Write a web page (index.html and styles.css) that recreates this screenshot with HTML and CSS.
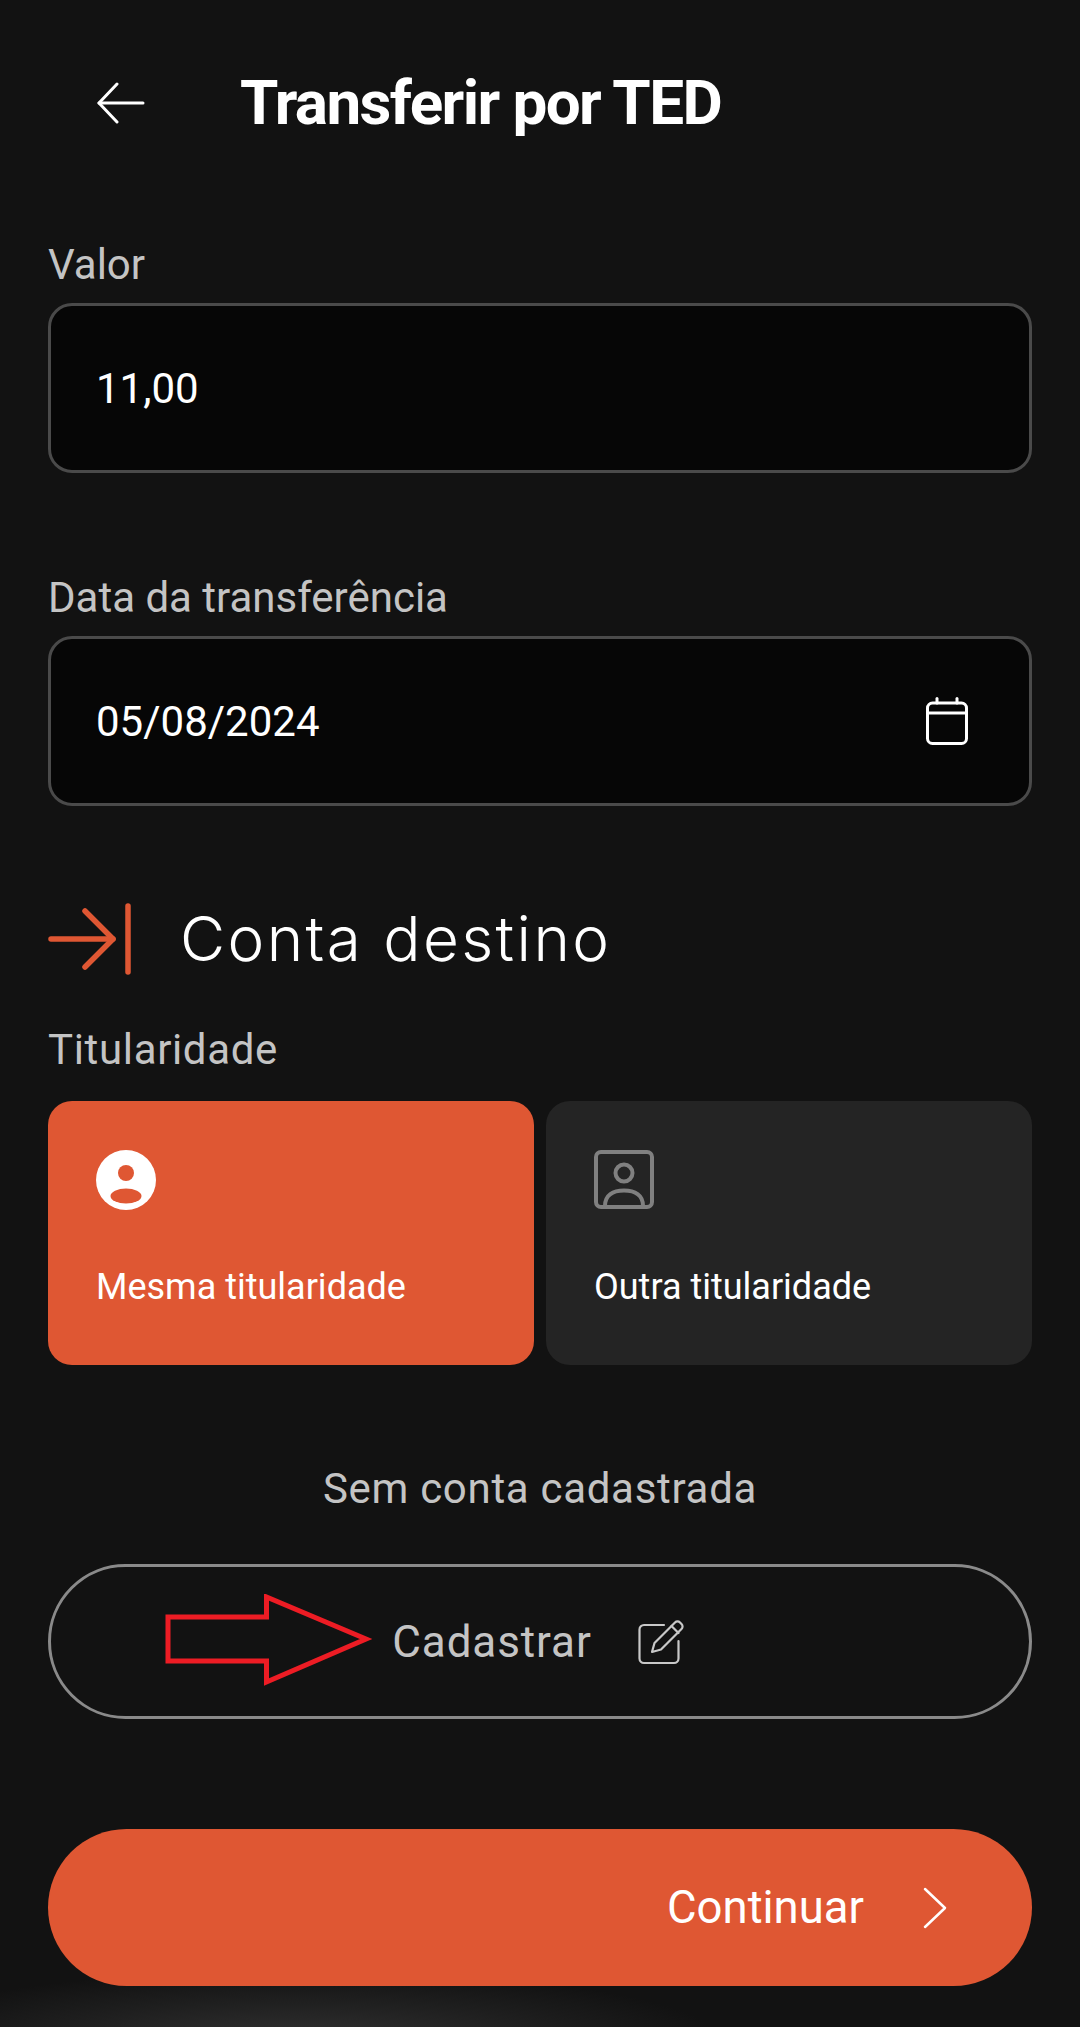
FILE: index.html
```html
<!DOCTYPE html>
<html lang="pt-BR">
<head>
    <meta charset="UTF-8">
    <meta name="viewport" content="width=device-width, initial-scale=1.0">
    <title>Transferir por TED</title>
    <link rel="stylesheet" href="styles.css">
</head>
<body>
    <div class="container">
        <header class="top-bar">
            <svg class="back-icon" viewBox="0 0 48 42" fill="none" stroke="#fff" stroke-width="3" stroke-linecap="round" stroke-linejoin="round">
                <path d="M46 21H2"/>
                <path d="M20 2 2 21l18 19"/>
            </svg>
            <h1>Transferir por TED</h1>
        </header>

        <label class="field-label">Valor</label>
        <div class="field">
            <span>11,00</span>
        </div>

        <label class="field-label date-label">Data da transferência</label>
        <div class="field">
            <span>05/08/2024</span>
            <svg class="calendar-icon" viewBox="0 0 42 48" fill="none" stroke="#fff" stroke-width="3" stroke-linecap="round" stroke-linejoin="round">
                <rect x="1.5" y="6" width="39" height="40.5" rx="5"/>
                <path d="M1.5 16h39"/>
                <path d="M11 1.500V6"/>
                <path d="M31 1.500V6"/>
            </svg>
        </div>

        <div class="section-title">
            <svg class="section-icon" viewBox="0 0 84 72" fill="none" stroke="#df5733" stroke-width="5.500" stroke-linecap="round" stroke-linejoin="round">
                <path d="M3 36h62"/>
                <path d="M37 8l28 28-28 28"/>
                <path d="M80 3v66"/>
            </svg>
            <h2>Conta destino</h2>
        </div>

        <label class="field-label owner-label">Titularidade</label>
        <div class="owner-grid">
            <div class="owner-card active">
                <svg class="owner-icon" viewBox="0 0 60 60">
                    <circle cx="30" cy="30" r="30" fill="#fff"/>
                    <circle cx="30" cy="23" r="8" fill="#df5733"/>
                    <ellipse cx="30" cy="46" rx="15.500" ry="7.500" fill="#df5733"/>
                </svg>
                <p>Mesma titularidade</p>
            </div>
            <div class="owner-card">
                <svg class="owner-icon" viewBox="0 0 60 60" fill="none" stroke="#808080" stroke-width="4" stroke-linecap="round" stroke-linejoin="round">
                    <rect x="2" y="2" width="56" height="55" rx="5"/>
                    <circle cx="30" cy="23" r="8.500"/>
                    <path d="M11 56c0-11 8-15.500 19-15.500S49 45 49 56"/>
                </svg>
                <p>Outra titularidade</p>
            </div>
        </div>

        <p class="no-account">Sem conta cadastrada</p>

        <button class="register-btn">
            <span>Cadastrar</span>
            <svg class="edit-icon" viewBox="0 0 46 46" fill="none" stroke="#c8c8c8" stroke-width="2.200" stroke-linecap="round" stroke-linejoin="round">
                <path d="M26 6H6a4.500 4.500 0 0 0-4.500 4.500v29A4.500 4.500 0 0 0 6 44h30a4.500 4.500 0 0 0 4.500-4.500V22"/>
                <path d="M14 33l2.500-9L37 3.500a3.500 3.500 0 0 1 5 0l1.500 1.500a3.500 3.500 0 0 1 0 5L23 30.500z"/>
                <path d="M33.500 7l7 7"/>
            </svg>
            <svg class="red-arrow" viewBox="0 0 210 96" fill="none" stroke="#ed1c24" stroke-width="5" stroke-linejoin="miter">
                <path d="M5 23h98.500V3L203 45l-99.500 43V67H5z"/>
            </svg>
        </button>

        <button class="continue-btn">
            <span>Continuar</span>
            <svg class="chevron-icon" viewBox="0 0 24 42" fill="none" stroke="#fff" stroke-width="2.500" stroke-linecap="round" stroke-linejoin="round">
                <path d="M2 2l20 19L2 40"/>
            </svg>
        </button>
    </div>
</body>
</html>
```

FILE: styles.css
```css
:root {
    --bg-color: #121212;
    --field-bg: #060606;
    --field-border: #4a4a4a;
    --accent-color: #df5733;
    --muted-color: #c4c4c4;
    --card-bg: #242424;
}
* { box-sizing: border-box; }
html, body { height: 100%; }
body {
    margin: 0;
    font-family: Roboto, "Noto Sans", sans-serif;
    color: #fff;
    background: radial-gradient(ellipse 420px 70px at 300px 2040px, #303030 0%, rgba(18, 18, 18, 0) 100%) no-repeat, var(--bg-color);
}
.container {
    width: 1080px;
    height: 2027px;
    padding: 0 48px;
}
.top-bar {
    display: flex;
    align-items: center;
    height: 206px;
    padding-left: 49px;
}
.back-icon { width: 48px; height: 42px; flex: none; margin-right: 95px; }
h1 {
    margin: 0;
    font-size: 62px;
    font-weight: 700;
    letter-spacing: -1.600px;
    line-height: 68px;
}
.field-label {
    display: block;
    margin: 35px 0 14px;
    font-size: 42px;
    line-height: 48px;
    color: var(--muted-color);
}
.field-label.date-label { margin-top: 101px; }
.field-label.owner-label { margin: 47px 0 27px; letter-spacing: 0.650px; }
.field {
    display: flex;
    align-items: center;
    justify-content: space-between;
    height: 170px;
    padding: 0 61px 0 45px;
    background: var(--field-bg);
    border: 3px solid var(--field-border);
    border-radius: 24px;
    font-size: 42px;
}
.calendar-icon { width: 42px; height: 48px; }
.section-title {
    display: flex;
    align-items: center;
    height: 80px;
    margin-top: 93px;
}
.section-icon { width: 84px; height: 72px; flex: none; margin-right: 48px; }
h2 {
    margin: 0 0 2px;
    font-family: Inter, sans-serif;
    font-size: 62px;
    font-weight: 300;
    letter-spacing: 2.400px;
}
.owner-grid {
    display: grid;
    grid-template-columns: 1fr 1fr;
    gap: 12px;
}
.owner-card {
    height: 264px;
    padding: 49px 48px 0;
    background: var(--card-bg);
    border-radius: 24px;
}
.owner-card.active { background: var(--accent-color); }
.owner-icon { display: block; width: 60px; height: 60px; }
.owner-card p {
    margin: 55px 0 0;
    font-size: 36px;
    line-height: 44px;
}
.no-account {
    margin: 100px 0 51px;
    font-size: 42px;
    line-height: 48px;
    letter-spacing: 0.700px;
    text-align: center;
    color: var(--muted-color);
}
.register-btn {
    position: relative;
    display: flex;
    align-items: center;
    justify-content: center;
    gap: 46px;
    width: 100%;
    height: 155px;
    padding: 0 4px 0 0;
    background: none;
    border: 3px solid #8a8a8a;
    border-radius: 78px;
    font-family: inherit;
    font-size: 44px;
    letter-spacing: 0.900px;
    color: var(--muted-color);
}
.edit-icon { width: 46px; height: 46px; }
/* annotation drawn on the screenshot */
.red-arrow {
    position: absolute;
    left: 112px;
    top: 27px;
    width: 210px;
    height: 96px;
}
.continue-btn {
    display: flex;
    align-items: center;
    justify-content: flex-end;
    gap: 59px;
    width: 100%;
    height: 157px;
    margin-top: 110px;
    padding: 0 85px 0 0;
    background: var(--accent-color);
    border: none;
    border-radius: 79px;
    font-family: inherit;
    font-size: 45.500px;
    color: #fff;
}
.chevron-icon { width: 24px; height: 42px; }
```
